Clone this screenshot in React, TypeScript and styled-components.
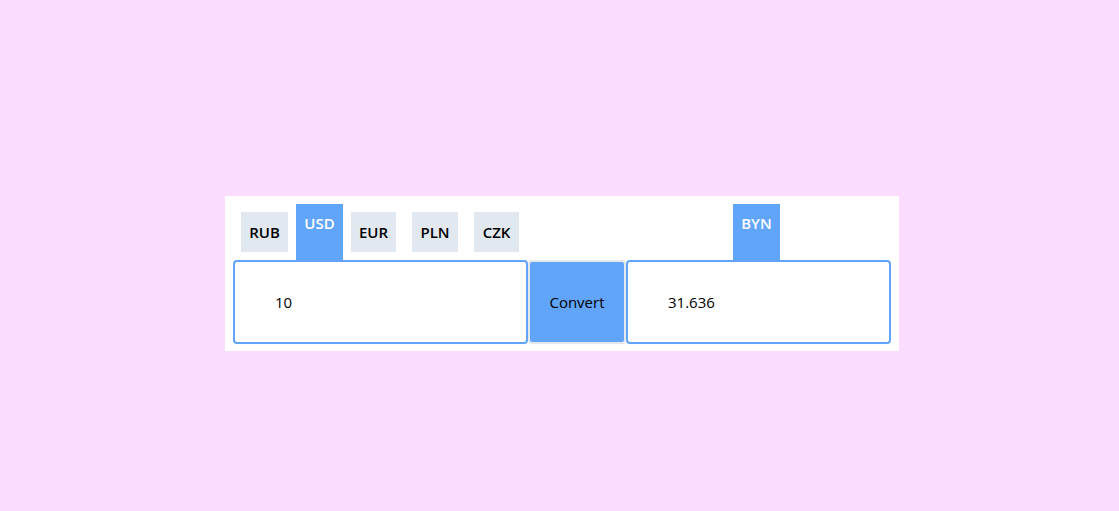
import styled, { createGlobalStyle } from "styled-components";

const GlobalStyle = createGlobalStyle`
  * {
    box-sizing: border-box;
  }

  body {
    margin: 0;
    background-color: #fcdcfe;
    font-family: "Open Sans", "Noto Sans", sans-serif;
  }
`;

const colors = {
  BLUE: "#60a5fa",
  TAB: "#e2e8f0",
  WHITE: "#ffffff",
  TEXT: "#000000",
  BORDER: "#e5e7eb",
};

const currencies = [
  { code: "RUB", width: 47, gap: 0 },
  { code: "USD", width: 47, gap: 8 },
  { code: "EUR", width: 45, gap: 8 },
  { code: "PLN", width: 46, gap: 16 },
  { code: "CZK", width: 45, gap: 16 },
];

interface TabProps {
  $active?: boolean;
  $offset?: number;
  $width?: number;
}

interface TabListProps {
  $indent: number;
}

interface SideProps {
  $width: number;
}

const Page = styled.div`
  min-height: 100vh;
  padding: 196px 0 0 225px;
`;

const Card = styled.div`
  display: flex;
  align-items: flex-end;
  width: 674px;
  padding: 8px 8px 7px;
  background-color: ${colors.WHITE};
`;

const Side = styled.div<SideProps>`
  display: flex;
  flex-direction: column;
  width: ${({ $width }) => $width}px;
`;

const TabList = styled.ul<TabListProps>`
  display: flex;
  align-items: flex-start;
  height: 56px;
  margin: 0;
  padding: 0 0 0 ${({ $indent }) => $indent}px;
  list-style: none;
`;

const Tab = styled.li<TabProps>`
  display: flex;
  justify-content: center;
  width: ${({ $width }) => $width ?? 47}px;
  margin-left: ${({ $offset }) => $offset ?? 0}px;
  margin-top: ${({ $active }) => ($active ? 0 : 8)}px;
  height: ${({ $active }) => ($active ? 56 : 40)}px;
  padding-top: ${({ $active }) => ($active ? 9 : 10)}px;
  font-size: 15px;
  font-weight: 600;
  line-height: 20px;
  color: ${({ $active }) => ($active ? colors.WHITE : colors.TEXT)};
  background-color: ${({ $active }) => ($active ? colors.BLUE : colors.TAB)};
  cursor: pointer;
`;

const Field = styled.div`
  display: flex;
  align-items: center;
  height: 84px;
  padding-left: 40px;
  border: 2px solid ${colors.BLUE};
  border-radius: 4px;
  font-size: 15px;
  color: ${colors.TEXT};
  background-color: ${colors.WHITE};
`;

const ConvertButton = styled.button`
  width: 98px;
  height: 84px;
  margin: 0;
  padding: 0;
  border: 2px solid ${colors.BORDER};
  border-radius: 4px;
  font-family: inherit;
  font-size: 15px;
  color: ${colors.TEXT};
  background-color: ${colors.BLUE};
  cursor: pointer;
`;

function App() {
  return (
    <Page>
      <GlobalStyle />
      <Card>
        <Side $width={295}>
          <TabList $indent={8}>
            {currencies.map((c) => (
              <Tab
                key={c.code}
                $active={c.code === "USD"}
                $offset={c.gap}
                $width={c.width}
              >
                {c.code}
              </Tab>
            ))}
          </TabList>
          <Field>10</Field>
        </Side>
        <ConvertButton>Convert</ConvertButton>
        <Side $width={265}>
          <TabList $indent={107}>
            <Tab $active>BYN</Tab>
          </TabList>
          <Field>31.636</Field>
        </Side>
      </Card>
    </Page>
  );
}

export default App;
